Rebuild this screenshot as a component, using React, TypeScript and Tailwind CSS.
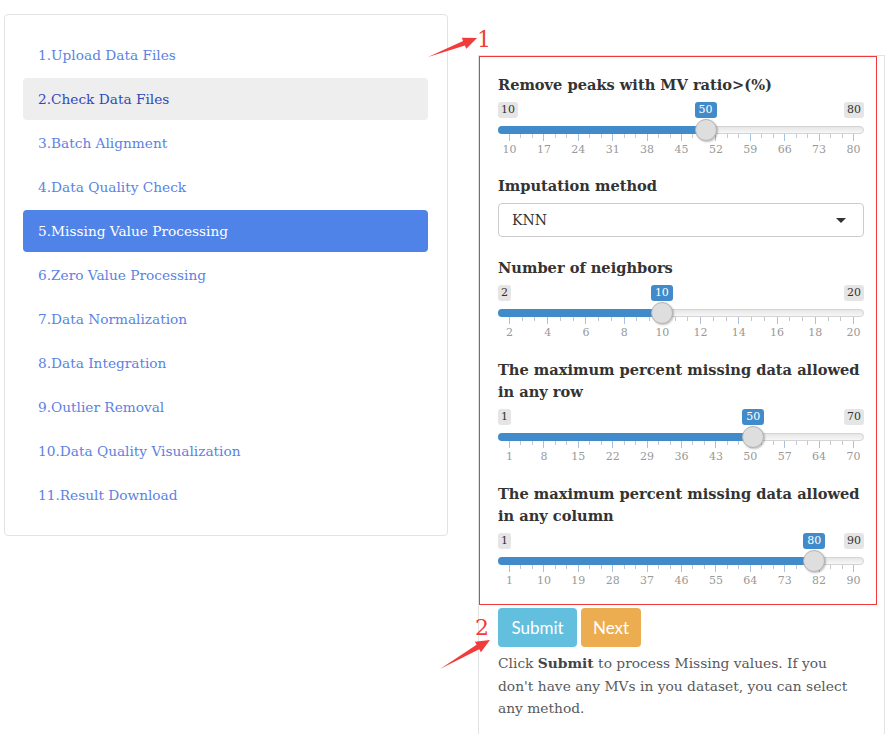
import React from "react";

const serif = "font-['Georgia','DejaVu_Serif',serif]";

const steps = [
  "1.Upload Data Files",
  "2.Check Data Files",
  "3.Batch Alignment",
  "4.Data Quality Check",
  "5.Missing Value Processing",
  "6.Zero Value Processing",
  "7.Data Normalization",
  "8.Data Integration",
  "9.Outlier Removal",
  "10.Data Quality Visualization",
  "11.Result Download",
];

type SliderProps = { min: number; max: number; value: number; labels: number[] };

// ion.rangeSlider look-alike
function Slider({ min, max, value, labels }: SliderProps) {
  const pct = (value - min) / (max - min);
  const inner = 344;
  const handleX = 11 + pct * inner;
  const n = labels.length - 1;
  const minors = Array.from({ length: n * 3 + 1 }, (_, i) => i).filter((i) => i % 3 !== 0);
  return (
    <div className="relative h-[56px] w-[366px]">
      <div className="flex justify-between">
        <span className="rounded-[3px] bg-[#e5e5e5] px-[3px] text-[11px] leading-[16px] text-[#333]">{min}</span>
        <span className="rounded-[3px] bg-[#e5e5e5] px-[3px] text-[11px] leading-[16px] text-[#333]">{max}</span>
      </div>
      <span
        className="absolute top-0 -translate-x-1/2 rounded-[3px] bg-[#428bca] px-[4px] text-[11px] leading-[16px] text-white"
        style={{ left: handleX }}
      >
        {value}
      </span>
      <div className="absolute left-0 right-0 top-[24px] h-[8px] rounded-full border border-[#d4d4d4] bg-gradient-to-b from-[#e6e6e6] to-[#f7f7f7]" />
      <div className="absolute left-0 top-[24px] h-[8px] rounded-l-full bg-[#428bca]" style={{ width: handleX }} />
      {labels.map((_, i) => (
        <div key={"M" + i} className="absolute top-[32px] h-[7px] w-px bg-[#a7c2e0]" style={{ left: 11 + (i / n) * inner }} />
      ))}
      {minors.map((i) => (
        <div key={"m" + i} className="absolute top-[32px] h-[4px] w-px bg-[#c3c9d1]" style={{ left: 11 + (i / (n * 3)) * inner }} />
      ))}
      {labels.map((l, i) => (
        <span
          key={"l" + i}
          className="absolute top-[40px] -translate-x-1/2 text-[11px] leading-[16px] text-[#999]"
          style={{ left: 11.5 + (i / n) * inner }}
        >
          {l}
        </span>
      ))}
      <div
        className="absolute top-[17px] h-[22px] w-[22px] -translate-x-1/2 rounded-full border border-[#b5b5b5] bg-[#dedede] shadow-[1px_1px_2px_rgba(0,0,0,0.25)]"
        style={{ left: handleX }}
      />
    </div>
  );
}

function Label({ children }: { children: React.ReactNode }) {
  return <p className="text-[14.6px] font-bold leading-[22px] text-[#333]">{children}</p>;
}

export default function App() {
  return (
    <div className={`relative flex min-h-[734px] w-[885px] items-start bg-white pl-[4px] pt-[14px] ${serif}`}>
      {/* sidebar */}
      <div className="w-[444px] rounded-[4px] border border-[#e3e3e3] bg-white p-[19px] pl-[18px]">
        <ul className="flex flex-col gap-[2px]">
          {steps.map((s, i) => (
            <li
              key={s}
              className={
                "flex h-[42px] items-center rounded-[4px] px-[15px] pt-[1px] text-[13.7px] " +
                (i === 4
                  ? "bg-[#5083e8] text-white"
                  : i === 1
                  ? "bg-[#eeeeee] text-[#3149b8]"
                  : "text-[#5b82e3]")
              }
            >
              {s}
            </li>
          ))}
        </ul>
      </div>

      {/* main panel */}
      <div className="relative ml-[30px] mt-[41px] h-[680px] w-[407px] border-l border-t border-r border-[#e3e3e3] px-[19px] pt-[18px]">
        <Label>Remove peaks with MV ratio&gt;(%)</Label>
        <div className="mt-[6px]">
          <Slider min={10} max={80} value={50} labels={[10, 17, 24, 31, 38, 45, 52, 59, 66, 73, 80]} />
        </div>

        <div className="mt-[17px]">
          <Label>Imputation method</Label>
          <div className="mt-[6px] flex h-[34px] w-[366px] items-center justify-between rounded-[4px] border border-[#cccccc] pl-[13px] pr-[17px] text-[14px] text-[#333]">
            <span>KNN</span>
            <span className="h-0 w-0 border-x-[5px] border-t-[5px] border-x-transparent border-t-[#333]" />
          </div>
        </div>

        <div className="mt-[20px]">
          <Label>Number of neighbors</Label>
          <div className="mt-[6px]">
            <Slider min={2} max={20} value={10} labels={[2, 4, 6, 8, 10, 12, 14, 16, 18, 20]} />
          </div>
        </div>

        <div className="mt-[18px]">
          <Label>
            The maximum percent missing data allowed
            <br />
            in any row
          </Label>
          <div className="mt-[6px]">
            <Slider min={1} max={70} value={50} labels={[1, 8, 15, 22, 29, 36, 43, 50, 57, 64, 70]} />
          </div>
        </div>

        <div className="mt-[18px]">
          <Label>
            The maximum percent missing data allowed
            <br />
            in any column
          </Label>
          <div className="mt-[6px]">
            <Slider min={1} max={90} value={80} labels={[1, 10, 19, 28, 37, 46, 55, 64, 73, 82, 90]} />
          </div>
        </div>

        <div className="mt-[19px] flex gap-[4px] font-['Lato',sans-serif] text-[17px] text-white">
          <button className="h-[39px] w-[79px] rounded-[4px] bg-[#62bfde]">Submit</button>
          <button className="h-[39px] w-[60px] rounded-[4px] bg-[#ecad50]">Next</button>
        </div>

        <p className="mt-[5px] text-[13.8px] leading-[22.5px] text-[#595959]">
          Click <b className="text-[#444]">Submit</b> to process Missing values. If you
          <br />
          don't have any MVs in you dataset, you can select
          <br />
          any method.
        </p>

        {/* annotation box */}
        <div className="pointer-events-none absolute left-0 top-0 h-[549px] w-[398px] border border-[#f03a3a]" />
      </div>

      {/* annotation arrows */}
      <svg className="pointer-events-none absolute left-0 top-0" width="885" height="734">
        <polygon points="428,57 464.9,45.6 466.3,48.8 477,38 461.8,37.7 463.1,41" fill="#f23c3c" />
        <polygon points="440,669 479.2,649.2 480.9,652.2 490,640 474.9,641.8 476.6,644.8" fill="#f23c3c" />
      </svg>
      <span className="absolute left-[477px] top-[28px] text-[22px] leading-[24px] text-[#f23c3c]">1</span>
      <span className="absolute left-[475px] top-[616px] text-[22px] leading-[24px] text-[#f23c3c]">2</span>
    </div>
  );
}
